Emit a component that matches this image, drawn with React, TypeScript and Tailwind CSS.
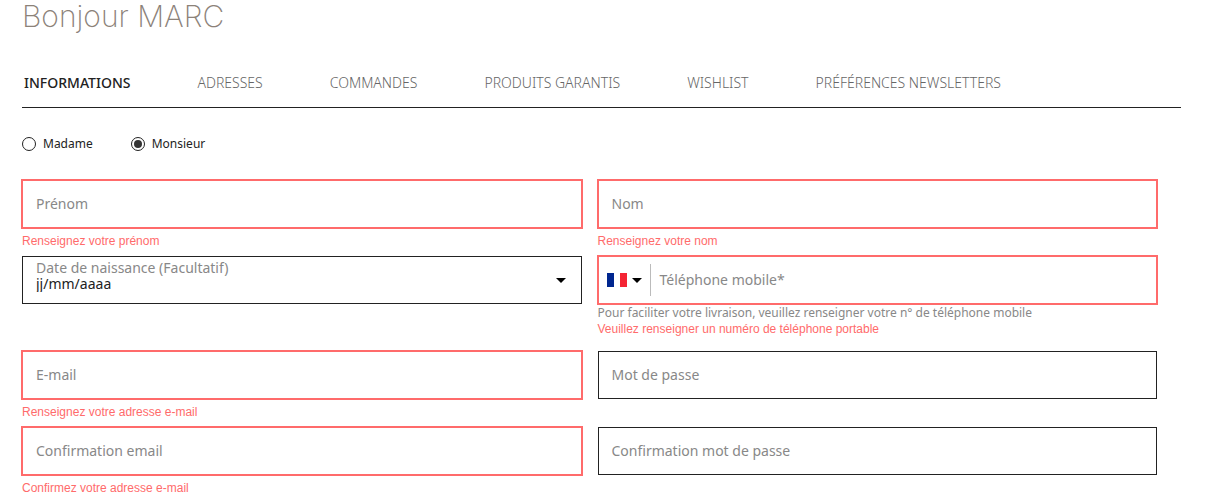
import { useId, useState } from "react";

type FieldProps = {
  label: string;
  name: string;
  type?: string;
  error?: string;
};

const tabs = [
  "INFORMATIONS",
  "ADRESSES",
  "COMMANDES",
  "PRODUITS GARANTIS",
  "WISHLIST",
  "PRÉFÉRENCES NEWSLETTERS",
];

function Caret() {
  return (
    <svg viewBox="0 0 10 5" className="h-[5px] w-2.5" aria-hidden="true">
      <path d="M0 0h10L5 5z" fill="#000" />
    </svg>
  );
}

function ErrorText({ id, children }: { id: string; children: string }) {
  return (
    <p id={id} className="font-['Liberation_Sans',sans-serif] text-xs leading-4 text-[#ff6b6b]">
      {children}
    </p>
  );
}

function Field({ label, name, type = "text", error }: FieldProps) {
  const id = useId();
  return (
    <div>
      <div
        className={
          error
            ? "grid h-12 border border-[#ff6b6b] ring-1 ring-[#ff6b6b]"
            : "grid h-12 border border-[#222]"
        }
      >
        <input
          id={id}
          name={name}
          type={type}
          placeholder=" "
          aria-invalid={Boolean(error)}
          aria-describedby={error ? `${id}-error` : undefined}
          className="peer col-start-1 row-start-1 w-full bg-transparent px-[13px] text-sm text-[#222] outline-none"
        />
        <label
          htmlFor={id}
          className="pointer-events-none col-start-1 row-start-1 self-center px-[13px] text-sm text-[#888] peer-[:not(:placeholder-shown)]:self-start peer-[:not(:placeholder-shown)]:text-[10px]"
        >
          {label}
        </label>
      </div>
      {error && (
        <div className="pt-[5px]">
          <ErrorText id={`${id}-error`}>{error}</ErrorText>
        </div>
      )}
    </div>
  );
}

function DateField() {
  return (
    <div>
      <div className="flex h-12 items-center border border-[#222] pr-[15px] pl-[13px]">
        <div className="flex min-w-0 flex-1 flex-col pb-2">
          <label htmlFor="birthdate" className="text-sm leading-4 text-[#888]">
            Date de naissance (Facultatif)
          </label>
          <input
            id="birthdate"
            name="birthdate"
            type="text"
            placeholder="jj/mm/aaaa"
            className="h-4 w-full bg-transparent text-sm leading-4 text-[#222] outline-none placeholder:text-[#222]"
          />
        </div>
        <button type="button" aria-label="Ouvrir le calendrier">
          <Caret />
        </button>
      </div>
    </div>
  );
}

function PhoneField() {
  return (
    <div className="pb-[7px]">
      <div className="flex h-12 items-center border border-[#ff6b6b] ring-1 ring-[#ff6b6b]">
        <button
          type="button"
          aria-label="Pays : France"
          className="flex h-8 items-center gap-[5px] border-r border-[#bbb] pr-2 pl-2"
        >
          <svg viewBox="0 0 20 14" className="h-3.5 w-5" aria-hidden="true">
            <path d="M0 0h7v14H0z" fill="#00268f" />
            <path d="M7 0h6v14H7z" fill="#fff" />
            <path d="M13 0h7v14h-7z" fill="#f42434" />
          </svg>
          <Caret />
        </button>
        <div className="grid h-full flex-1">
          <input
            id="phone"
            name="phone"
            type="tel"
            placeholder=" "
            aria-invalid="true"
            aria-describedby="phone-help phone-error"
            className="peer col-start-1 row-start-1 w-full bg-transparent px-[9px] text-sm text-[#222] outline-none"
          />
          <label
            htmlFor="phone"
            className="pointer-events-none col-start-1 row-start-1 self-center px-[9px] text-sm text-[#888] peer-[:not(:placeholder-shown)]:self-start peer-[:not(:placeholder-shown)]:text-[10px]"
          >
            Téléphone mobile*
          </label>
        </div>
      </div>
      <p id="phone-help" className="pt-px text-xs leading-4 text-[#888]">
        Pour faciliter votre livraison, veuillez renseigner votre n° de téléphone mobile
      </p>
      <ErrorText id="phone-error">Veuillez renseigner un numéro de téléphone portable</ErrorText>
    </div>
  );
}

export default function App() {
  const [title, setTitle] = useState("Monsieur");

  return (
    <main className="bg-white pr-[37px] pb-1 pl-[22px] font-['Noto_Sans',sans-serif] text-[#222]">
      <h1 className="font-['Inter',sans-serif] text-3xl leading-8 font-extralight text-[#8c8279]">
        Bonjour MARC
      </h1>

      <nav className="mt-10 border-b border-[#222] pb-[13px]">
        <ul className="flex flex-wrap gap-x-[67px] px-0.5 text-sm leading-[22px]">
          {tabs.map((tab, i) => (
            <li key={tab}>
              <a
                href="#"
                aria-current={i === 0 ? "page" : undefined}
                className={i === 0 ? "font-medium text-[#222]" : "font-light text-[#666]"}
              >
                {tab}
              </a>
            </li>
          ))}
        </ul>
      </nav>

      <form className="pr-6">
        <fieldset className="mt-[26px] flex gap-[38px]">
          {["Madame", "Monsieur"].map((value) => (
            <label key={value} className="flex items-center gap-[7px] text-xs leading-5">
              <input
                type="radio"
                name="civility"
                value={value}
                checked={title === value}
                onChange={() => setTitle(value)}
                className="size-3.5 appearance-none rounded-full border border-[#222] bg-clip-content p-0.5 checked:bg-[#333]"
              />
              {value}
            </label>
          ))}
        </fieldset>

        <div className="mt-[26px] grid grid-cols-2 gap-x-4 gap-y-[7px]">
          <Field label="Prénom" name="firstname" error="Renseignez votre prénom" />
          <Field label="Nom" name="lastname" error="Renseignez votre nom" />
          <DateField />
          <PhoneField />
          <Field
            label="E-mail"
            name="email"
            type="email"
            error="Renseignez votre adresse e-mail"
          />
          <Field label="Mot de passe" name="password" type="password" />
          <Field
            label="Confirmation email"
            name="emailConfirmation"
            type="email"
            error="Confirmez votre adresse e-mail"
          />
          <Field
            label="Confirmation mot de passe"
            name="passwordConfirmation"
            type="password"
          />
        </div>
      </form>
    </main>
  );
}
